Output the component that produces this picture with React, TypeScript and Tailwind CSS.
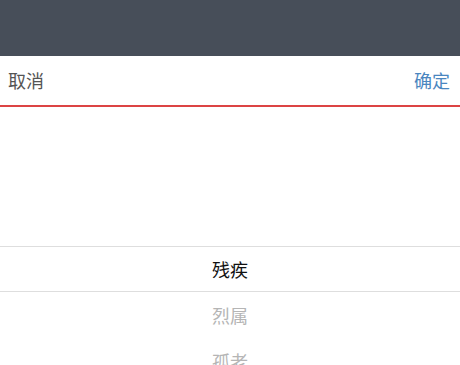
export default function App() {
  const options = ['残疾', '烈属', '孤老'];

  return (
    <div
      className="w-[460px] h-[365px] overflow-hidden bg-white flex flex-col"
      style={{ fontFamily: '"Noto Sans CJK SC", "Noto Sans", sans-serif' }}
    >
      <div className="h-[56px] shrink-0 bg-[#474e59]"></div>

      <header className="h-[49px] shrink-0 flex items-center justify-between pl-[8px] pr-[10px] bg-white">
        <button className="text-[18px] text-[#555555]">取消</button>
        <button className="text-[18px] text-[#4a86c0]">确定</button>
      </header>
      <div className="h-[2px] shrink-0 bg-[#dc4444]"></div>

      <div className="h-[139px] shrink-0"></div>

      <div className="flex flex-col">
        <div className="h-[46px] flex items-center justify-center border-y border-[#dedede] text-[18px] text-[#111111]">
          {options[0]}
        </div>
        {options.slice(1).map((o) => (
          <div key={o} className="h-[46px] flex items-center justify-center text-[18px] text-[#b5b5b5]">
            {o}
          </div>
        ))}
      </div>
    </div>
  );
}
